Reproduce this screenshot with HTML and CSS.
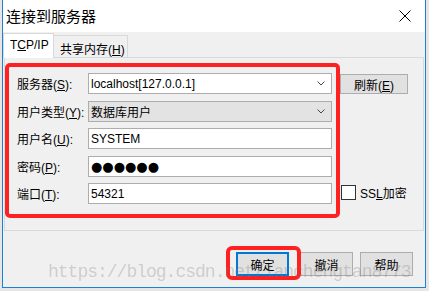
FILE: index.html
```html
<!DOCTYPE html>
<html lang="zh-CN">
  <head>
    <meta charset="UTF-8" />
    <title>连接到服务器</title>
    <link rel="stylesheet" href="styles.css">
  </head>
  <body>
    <div class="window">
      <div class="titlebar">
        <span class="title">连接到服务器</span>
        <svg class="close" width="12" height="12" viewBox="0 0 12 12">
          <path d="M0.5 0.5 L11.5 11.5 M11.5 0.5 L0.5 11.5" stroke="#000" stroke-width="1" fill="none" />
        </svg>
      </div>

      <div class="tabs">
        <div class="tab active"><span>T<u>C</u>P/IP</span></div>
        <div class="tab"><span>共享内存(<u>H</u>)</span></div>
      </div>

      <div class="panel">
        <div class="fields">
          <label>服务器(<u>S</u>):</label>
          <div class="field combo">
            <span>localhost[127.0.0.1]</span>
            <svg width="8" height="5" viewBox="0 0 8 5"><path d="M0.5 0.5 L4 4 L7.5 0.5" stroke="#444" fill="none" /></svg>
          </div>

          <label>用户类型(<u>Y</u>):</label>
          <div class="field combo disabled">
            <span>数据库用户</span>
            <svg width="8" height="5" viewBox="0 0 8 5"><path d="M0.5 0.5 L4 4 L7.5 0.5" stroke="#444" fill="none" /></svg>
          </div>

          <label>用户名(<u>U</u>):</label>
          <div class="field"><span>SYSTEM</span></div>

          <label>密码(<u>P</u>):</label>
          <div class="field"><span class="dots">●●●●●●</span></div>

          <label>端口(<u>T</u>):</label>
          <div class="field"><span>54321</span></div>
        </div>

        <div class="side">
          <button class="btn refresh">刷新(<u>E</u>)</button>
          <label class="check"><span class="box"></span><span>SS<u>L</u>加密</span></label>
        </div>
      </div>

      <div class="actions">
        <span class="mark"><button class="btn default">确定</button></span>
        <button class="btn">撤消</button>
        <button class="btn">帮助</button>
      </div>

      <div class="watermark">https://blog.csdn.net/lanchengtan8773</div>
    </div>
  </body>
</html>
```

FILE: styles.css
```css
* {
  box-sizing: border-box;
}

body {
  margin: 0;
  background: #e6e6e6;
  font: 12px "Liberation Sans", "Noto Sans CJK SC", sans-serif;
  color: #000;
  overflow: hidden;
}

u {
  text-decoration: underline;
  text-underline-offset: 1px;
}

.window {
  position: relative;
  margin-left: 2px;
  width: 424px;
  height: 288px;
  background: #f0f0f0;
  border: 1px solid #1c80d6;
  border-top: 0;
  display: flex;
  flex-direction: column;
}

.titlebar {
  height: 32px;
  background: #fff;
  display: flex;
  align-items: center;
  justify-content: space-between;
  padding: 0 14px 0 3px;
}

.title {
  font-size: 15px;
  line-height: 1;
}

.close {
  display: block;
}

/* tabs */
.tabs {
  display: flex;
  align-items: flex-end;
  height: 24px;
  margin-top: 1px;
}

.tab {
  height: 22px;
  width: 74px;
  border: 1px solid #d9d9d9;
  border-bottom: 0;
  border-left: 0;
  padding: 3px 0 0 6px;
  display: flex;
  align-items: center;
}

.tab.active {
  width: 51px;
  height: 25px;
  margin-bottom: -1px;
  border-left: 1px solid #d9d9d9;
  background: #fff;
  padding: 0 0 3px 6px;
  position: relative;
  z-index: 1;
}

.panel {
  margin: 0 1px;
  height: 174px;
  border: 1px solid #d9d9d9;
  padding-top: 5px;
  display: flex;
}

.fields {
  align-self: flex-start;
  width: 335px;
  border: 4px solid #ff2121;
  border-radius: 5px;
  padding: 6px 4px 10px 8px;
  display: grid;
  grid-template-columns: 71px 1fr;
  grid-auto-rows: 21px;
  row-gap: 6.5px;
  align-items: center;
}

.field {
  height: 21px;
  border: 1px solid #adadad;
  background: #fff;
  display: flex;
  align-items: center;
  justify-content: space-between;
  padding: 0 6px 0 2px;
}

.field.disabled {
  background: #e3e3e3;
}

.dots {
  font-family: "DejaVu Sans", sans-serif;
  font-size: 13px;
  letter-spacing: 0;
}

.side {
  flex: 1;
  display: flex;
  flex-direction: column;
  justify-content: space-between;
  align-items: flex-start;
  padding: 11px 0 29px;
}

.btn {
  font: inherit;
  color: #000;
  background: #e1e1e1;
  border: 1px solid #adadad;
  padding: 0;
}

.refresh {
  width: 68px;
  height: 20px;
}

.check {
  display: flex;
  align-items: center;
  gap: 4px;
  margin-left: 1px;
}

.check .box {
  width: 15px;
  height: 15px;
  border: 1px solid #333;
  background: #fff;
}

/* bottom buttons */
.actions {
  display: flex;
  justify-content: flex-end;
  gap: 7px;
  margin-top: 21px;
  padding-right: 12px;
}

.actions .btn {
  display: block;
  width: 53px;
  height: 24px;
}

.btn.default {
  border: 2px solid #0078d7;
}

.mark {
  position: relative;
  margin-right: 4px;
}

.mark::after {
  content: "";
  position: absolute;
  top: -6px;
  bottom: -4px;
  left: -10px;
  right: -12px;
  border: 4px solid #ff2121;
  border-radius: 6px;
}

.watermark {
  position: absolute;
  left: 45px;
  top: 263px;
  font: 18px/1 "Liberation Mono", monospace;
  letter-spacing: -1px;
  color: rgba(120, 120, 120, 0.3);
  white-space: nowrap;
  pointer-events: none;
}
```
